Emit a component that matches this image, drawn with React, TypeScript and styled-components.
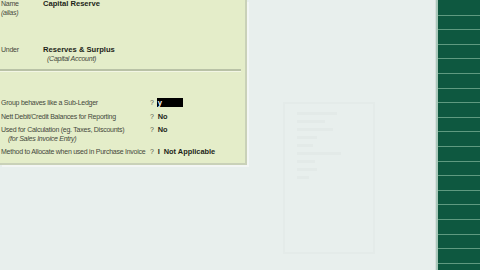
import styled, { createGlobalStyle } from "styled-components";

interface TextProps {
  $bold?: boolean;
  $italic?: boolean;
  $indent?: number;
};
interface RowProps {
  $top?: number;
};

const GlobalStyle = createGlobalStyle`
  html, body {
    margin: 0;
    padding: 0;
    background: #e8efed;
    overflow: hidden;
  }
`;

const Screen = styled.div`
  width: 480px;
  height: 270px;
  display: flex;
  font-family: "Liberation Sans", Arial, sans-serif;
  font-size: 7px;
  letter-spacing: -0.25px;
  color: #3a3d33;
`;
const MainArea = styled.div`
  flex: 1;
  position: relative;
  border-right: 1px solid #d8e0de;
`;
const Panel = styled.div`
  width: 247px;
  height: 165px;
  box-sizing: border-box;
  background: #e4edc9;
  border-right: 2px solid #c9d1b8;
  border-bottom: 2px solid #c9d1b8;
  box-shadow: 2px 2px 0 #f3f6f4;
  display: flex;
  flex-direction: column;
  overflow: hidden;
`;
const Section = styled.div`
  padding: 0 0 0 1px;
  display: flex;
  flex-direction: column;
`;
const Separator = styled.div`
  height: 2px;
  margin: 0 4px 0 0;
  background: #b9c2a6;
  border-bottom: 1px solid #f2f6e4;
`;
const Row = styled.div`
  display: grid;
  grid-template-columns: 42px 1fr;
  align-items: baseline;
  margin-top: ${(props: RowProps) => props.$top ?? 0}px;
  line-height: 9px;
`;
const OptRow = styled.div`
  display: grid;
  grid-template-columns: 149px 1fr;
  align-items: baseline;
  margin-top: ${(props: RowProps) => props.$top ?? 0}px;
  line-height: 9px;
`;
const Text = styled.span`
  font-weight: ${(props: TextProps) => (props.$bold ? 700 : 400)};
  font-size: ${(props: TextProps) => (props.$bold ? "7.6px" : "7px")};
  letter-spacing: ${(props: TextProps) => (props.$bold ? "0" : "-0.25px")};
  font-style: ${(props: TextProps) => (props.$italic ? "italic" : "normal")};
  padding-left: ${(props: TextProps) => props.$indent ?? 0}px;
  color: ${(props: TextProps) => (props.$bold ? "#1c1f18" : "#44483c")};
  white-space: nowrap;
`;
const Answer = styled.span`
  display: flex;
  align-items: center;
  gap: 4px;
  white-space: nowrap;
`;
const Q = styled.span`
  color: #55594c;
`;
const Value = styled.span`
  font-weight: 700;
  font-size: 7.4px;
  letter-spacing: 0;
  color: #1c1f18;
`;
const Cursor = styled.span`
  display: inline-block;
  width: 26px;
  height: 9px;
  background: #000;
  color: #fff;
  font-weight: 700;
  font-size: 7.6px;
  line-height: 9px;
  padding-left: 1px;
  box-sizing: border-box;
  margin-left: -1px;
`;
const Ghost = styled.div`
  position: absolute;
  left: 283px;
  top: 102px;
  width: 92px;
  height: 152px;
  border: 2px solid #e4ebe9;
  display: flex;
  flex-direction: column;
  gap: 5px;
  padding: 8px 0 0 12px;
  box-sizing: border-box;
`;
const GhostLine = styled.div`
  height: 3px;
  background: #e3eae8;
  width: ${(props: { $w: number }) => props.$w}px;
`;
const Strip = styled.div`
  width: 42px;
  border-left: 2px solid #a9c8ba;
  background: repeating-linear-gradient(
    180deg,
    #0e5840 0px,
    #0e5840 13.6px,
    #5f9a80 13.6px,
    #5f9a80 14.6px
  );
  background-position: 0 1px;
`;

export default function App() {
  return (
    <>
      <GlobalStyle />
      <Screen>
        <MainArea>
          <Panel>
            <Section style={{ marginTop: -1 }}>
              <Row>
                <Text>Name</Text>
                <Text $bold>Capital Reserve</Text>
              </Row>
              <Row $top={0}>
                <Text $italic>(alias)</Text>
                <span />
              </Row>
              <Row $top={28}>
                <Text>Under</Text>
                <Text $bold>Reserves &amp; Surplus</Text>
              </Row>
              <Row>
                <span />
                <Text $italic $indent={4}>(Capital Account)</Text>
              </Row>
            </Section>
            <div style={{ height: 6 }} />
            <Separator />
            <Section>
              <OptRow $top={26}>
                <Text>Group behaves like a Sub-Ledger</Text>
                <Answer>
                  <Q>?</Q>
                  <Cursor>y</Cursor>
                </Answer>
              </OptRow>
              <OptRow $top={5}>
                <Text>Nett Debit/Credit Balances for Reporting</Text>
                <Answer>
                  <Q>?</Q>
                  <Value>No</Value>
                </Answer>
              </OptRow>
              <OptRow $top={4}>
                <Text>Used for Calculation (eg. Taxes, Discounts)</Text>
                <Answer>
                  <Q>?</Q>
                  <Value>No</Value>
                </Answer>
              </OptRow>
              <OptRow>
                <Text $italic $indent={7}>(for Sales Invoice Entry)</Text>
                <span />
              </OptRow>
              <OptRow $top={4}>
                <Text>Method to Allocate when used in Purchase Invoice</Text>
                <Answer>
                  <Q>?</Q>
                  <Value>I</Value>
                  <Value>Not Applicable</Value>
                </Answer>
              </OptRow>
            </Section>
          </Panel>
          <Ghost>
            <GhostLine $w={40} />
            <GhostLine $w={28} />
            <GhostLine $w={36} />
            <GhostLine $w={20} />
            <GhostLine $w={16} />
            <GhostLine $w={44} />
            <GhostLine $w={18} />
            <GhostLine $w={20} />
            <GhostLine $w={12} />
          </Ghost>
        </MainArea>
        <Strip />
      </Screen>
    </>
  );
}
